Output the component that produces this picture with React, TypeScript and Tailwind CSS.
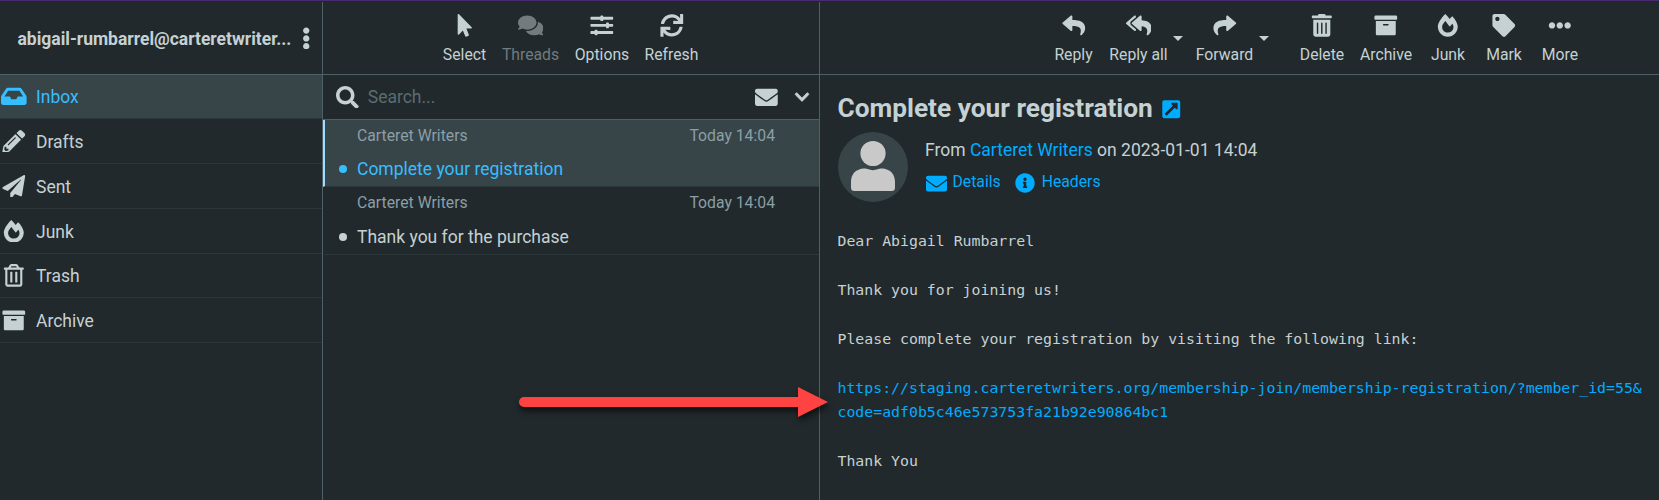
import type { ReactNode } from "react";
import type { IconType } from "react-icons";
import {
  FaArchive, FaChevronDown, FaComments, FaEllipsisH, FaEllipsisV, FaEnvelope, FaExternalLinkSquareAlt,
  FaFireAlt, FaInbox, FaInfoCircle, FaMousePointer, FaPaperPlane, FaPencilAlt, FaRegTrashAlt, FaReply,
  FaReplyAll, FaSearch, FaShare, FaSlidersH, FaSync, FaTag, FaTrashAlt,
} from "react-icons/fa";

const folders: { label: string; icon: IconType; row: string; active?: boolean }[] = [
  { label: "Inbox", icon: FaInbox, row: "h-[44px]", active: true },
  { label: "Drafts", icon: FaPencilAlt, row: "h-[45px]" },
  { label: "Sent", icon: FaPaperPlane, row: "h-[45px]" },
  { label: "Junk", icon: FaFireAlt, row: "h-[45px]" },
  { label: "Trash", icon: FaRegTrashAlt, row: "h-[44px]" },
  { label: "Archive", icon: FaArchive, row: "h-[45px]" },
];

function Tool({ icon: Icon, label, width, muted }: { icon: IconType; label: string; width: string; muted?: boolean }) {
  return (
    <button className={`flex shrink-0 flex-col items-center pt-[12px] ${width} ${muted ? "text-[#727b7e]" : ""}`}>
      <Icon className="h-[22.75px] w-[25.6px]" />
      <span className="mt-[6px] whitespace-nowrap text-[15.75px] leading-[24px]">{label}</span>
    </button>
  );
}

function Caret() {
  return (
    <span className="flex w-[10px] shrink-0 pt-[34px]">
      <svg viewBox="0 0 10 5" className="h-[5px] w-[10px]" fill="currentColor"><path d="M0 0h10L5 5z" /></svg>
    </span>
  );
}

function Message({ subject, selected }: { subject: string; selected?: boolean }) {
  return (
    <div className={`flex flex-col border-b border-b-[#2c373a] border-l-2 pl-[32px] pr-[44px] ${selected ? "h-[67px] border-l-[#a2dcff] bg-[#374549]" : "h-[68px] border-l-transparent"}`}>
      <div className="flex justify-between pt-[4px] text-[15.75px] leading-[24px] text-[#8b9fa7]">
        <span>Carteret Writers</span>
        <span>Today 14:04</span>
      </div>
      <div className={`-ml-[18px] flex items-center text-[17.5px] leading-[26px] ${selected ? "mt-[8px] text-[#37beff]" : "mt-[9px]"}`}>
        <span className="mr-[10px] size-[8px] rounded-full bg-current" />
        <span>{subject}</span>
      </div>
    </div>
  );
}

function Line({ children }: { children?: ReactNode }) {
  return <div className="h-[24.45px] whitespace-nowrap">{children}</div>;
}

export default function App() {
  return (
    <div className="relative flex h-[500px] w-[1659px] flex-col overflow-hidden bg-[#21292c] font-['Roboto',sans-serif] text-[17.5px] text-[#c5d1d3]">
      <div className="h-[2px] shrink-0 border-b border-[#2e1a4a] bg-[#4c2a72]" />
      <div className="flex min-h-0 flex-1">
        <aside className="flex w-[323px] shrink-0 flex-col border-r border-[#4d6066]">
          <header className="flex h-[73px] items-center border-b border-[#4d6066] pl-[17.5px]">
            <span className="w-[274px] whitespace-nowrap pt-[2px] font-bold tracking-[-0.01px]">abigail-rumbarrel@carteretwriter...</span>
            <FaEllipsisV className="ml-[10px] h-[22.75px] w-[8.5px]" />
          </header>
          {folders.map(({ label, icon: Icon, row, active }) => (
            <div key={label} className={`flex items-center border-b border-[#2c373a] ${row} ${active ? "bg-[#374549] text-[#37beff]" : ""}`}>
              <span className="flex w-[28px] justify-center"><Icon className="h-[22.75px] w-[25.6px]" /></span>
              <span className="ml-[8px] pt-[2px]">{label}</span>
            </div>
          ))}
        </aside>

        <section className="flex w-[497px] shrink-0 flex-col border-r border-[#4d6066]">
          <header className="flex h-[73px] border-b border-[#4d6066] pl-[112px]">
            <Tool icon={FaMousePointer} label="Select" width="w-[59px]" />
            <Tool icon={FaComments} label="Threads" width="w-[73px]" muted />
            <Tool icon={FaSlidersH} label="Options" width="w-[70px]" />
            <Tool icon={FaSync} label="Refresh" width="w-[69px]" />
          </header>
          <div className="flex h-[45px] items-center border-b border-[#4d6066] pl-[13px] pr-[9px]">
            <FaSearch className="size-[22.75px]" />
            <span className="ml-[9px] flex-1 text-[#5b6c72]">Search...</span>
            <FaEnvelope className="size-[22.75px]" />
            <FaChevronDown className="ml-[16px] size-[16px]" stroke="currentColor" strokeWidth={24} />
          </div>
          <Message subject="Complete your registration" selected />
          <Message subject="Thank you for the purchase" />
        </section>

        <main className="flex min-w-0 flex-1 flex-col">
          <header className="flex h-[73px] shrink-0 border-b border-[#4d6066] pl-[223px]">
            <Tool icon={FaReply} label="Reply" width="w-[61px]" />
            <Tool icon={FaReplyAll} label="Reply all" width="w-[69px]" />
            <Caret />
            <span className="w-[7px]" />
            <Tool icon={FaShare} label="Forward" width="w-[69px]" />
            <Caret />
            <span className="w-[21px]" />
            <Tool icon={FaTrashAlt} label="Delete" width="w-[64px]" />
            <Tool icon={FaArchive} label="Archive" width="w-[64px]" />
            <Tool icon={FaFireAlt} label="Junk" width="w-[60px]" />
            <Tool icon={FaTag} label="Mark" width="w-[52px]" />
            <Tool icon={FaEllipsisH} label="More" width="w-[60px]" />
          </header>
          <div className="pl-[17.5px]">
            <h1 className="flex h-[57px] items-center pt-[11px] text-[26.25px] font-bold">
              Complete your registration
              <FaExternalLinkSquareAlt className="ml-[8px] mt-[1px] size-[20.5px] text-[#00acff]" />
            </h1>
            <div className="flex">
              <svg viewBox="0 0 70 70" className="size-[70px] shrink-0">
                <circle cx="35" cy="35" r="35" fill="#374549" />
                <circle cx="35" cy="21.5" r="12.6" fill="#c9c9c9" />
                <path d="M13 50c0-8 5-13 13-13.400 4 0 5 1.600 9 1.600s5-1.600 9-1.600C52 37 57 42 57 50v5.500c0 2.500-1 3.500-3.500 3.500h-37c-2.500 0-3.500-1-3.500-3.500z" fill="#c9c9c9" />
              </svg>
              <div className="ml-[17.5px] flex flex-col">
                <div className="mt-[5px] whitespace-nowrap leading-[26px]">
                  From <a className="text-[#00acff]">Carteret Writers</a> on 2023-01-01 14:04
                </div>
                <div className="mt-[7px] flex h-[24px] items-center text-[15.75px] text-[#00acff]">
                  <FaEnvelope className="ml-[1px] mt-[2px] size-[21px]" />
                  <span className="ml-[5.5px]">Details</span>
                  <FaInfoCircle className="ml-[14.5px] mt-[2px] size-[20px]" />
                  <span className="ml-[6.5px]">Headers</span>
                </div>
              </div>
            </div>
            <div className="mt-[27px] font-['DejaVu_Sans_Mono',monospace] text-[14.85px] leading-[24.45px]">
              <Line>Dear Abigail Rumbarrel</Line>
              <Line />
              <Line>Thank you for joining us!</Line>
              <Line />
              <Line>Please complete your registration by visiting the following link:</Line>
              <Line />
              <a className="text-[#00acff]">
                <Line>https://staging.carteretwriters.org/membership-join/membership-registration/?member_id=55&amp;</Line>
                <Line>code=adf0b5c46e573753fa21b92e90864bc1</Line>
              </a>
              <Line />
              <Line>Thank You</Line>
            </div>
          </div>
        </main>
      </div>
      <svg viewBox="0 0 324 50" className="absolute left-[511px] top-[377px] h-[50px] w-[324px] drop-shadow-[1px_4px_3px_rgba(0,0,0,0.6)]">
        <path d="M13 20h274V10l30 15-30 15V30H13a5 5 0 0 1 0-10z" fill="#ff4343" />
      </svg>
    </div>
  );
}
